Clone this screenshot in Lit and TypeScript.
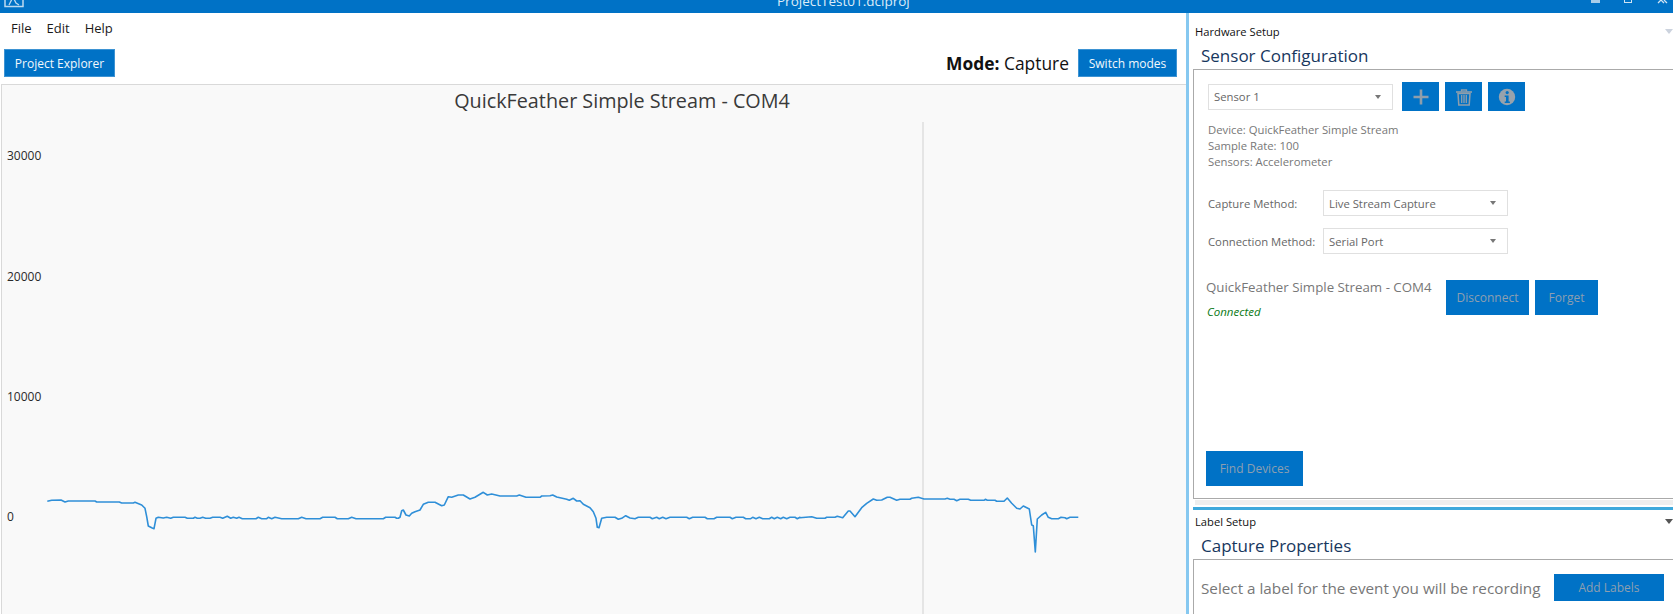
import { LitElement, html, css, svg } from "lit";
import { customElement } from "lit/decorators.js";

const seg6 = [[142,124],[155,121],[183,120],[195,126],[205,123],[285,123],[290,126],[358,126],[365,129],[400,129],[405,127],[425,135],[435,145],[440,170],[445,198],[455,203],[462,206],[468,175],[475,172],[490,174],[500,172],[512,175],[520,172],[555,172],[562,175],[580,175],[585,172],[592,175],[600,175],[608,172],[617,175],[630,175],[638,172],[660,172],[668,175],[682,169],[692,175],[700,172],[710,175],[717,172],[727,176],[768,176],[775,172],[785,176],[800,176],[805,172],[815,176],[825,172],[845,176],[895,176],[905,172],[918,176],[960,176],[968,172],[1005,172],[1012,176],[1045,176],[1055,172],[1068,176],[1150,176],[1157,172],[1185,172],[1190,175]];
const seg7 = [[-5,175],[0,172],[5,152],[10,150],[18,165],[28,168],[35,160],[45,155],[60,150],[70,133],[85,127],[105,127],[125,137],[133,135],[145,110],[155,112],[175,105],[190,105],[210,117],[225,112],[250,97],[262,105],[275,102],[300,108],[350,108],[358,105],[378,112],[420,112],[425,108],[450,107],[458,105],[470,111],[500,118],[508,121],[520,115],[530,123],[540,122],[550,133],[570,143],[580,155],[588,175],[592,202],[597,203],[605,175],[620,172],[645,172],[655,178],[665,175],[677,167],[690,174],[705,176],[715,172],[750,172],[757,176],[770,172],[778,176],[788,172],[798,176],[810,172],[860,172],[868,176],[878,172],[915,172],[922,176],[942,176],[950,172],[990,172],[997,176],[1008,172],[1030,172],[1037,176],[1052,176],[1058,172],[1068,176],[1078,172],[1088,176],[1108,176],[1115,172],[1123,176],[1132,172],[1142,176],[1150,172],[1160,176],[1170,172],[1185,172],[1192,176],[1200,172]];
const seg8 = [[0,173],[35,170],[50,175],[75,175],[80,172],[105,172],[112,169],[128,173],[145,153],[150,153],[165,170],[185,143],[200,130],[220,117],[230,121],[245,120],[262,112],[270,112],[290,121],[300,118],[330,118],[335,115],[355,112],[372,117],[435,117],[442,115],[450,118],[462,118],[470,122],[480,118],[505,118],[512,121],[552,121],[556,118],[562,121],[585,121],[590,124],[612,124],[622,114],[635,130],[650,145],[660,147],[670,138],[688,147],[695,195],[700,197],[706,276],[712,177],[725,165],[737,157],[745,172],[755,176],[775,176],[783,172],[795,173],[800,176],[810,172],[835,172]];

const fmt = (pts: number[][], ox: number) =>
  pts.map(([x, y]) => `${(ox + x / 3).toFixed(1)},${(460 + y / 3).toFixed(1)}`).join(" ");
const TRACE = [fmt(seg6, 0), fmt(seg7, 400), fmt(seg8, 800)].join(" ");

const TICKS = [
  { label: "30000", y: 155 },
  { label: "20000", y: 276 },
  { label: "10000", y: 396 },
  { label: "0", y: 516 },
];

@customElement("app-root")
export class AppRoot extends LitElement {
  static styles = css`
    :host {
      display: block;
      width: 1673px;
      height: 614px;
      overflow: hidden;
      background: #fff;
      font-family: "Open Sans", "Noto Sans", sans-serif;
      color: #1a1a1a;
    }
    * { box-sizing: border-box; }
    .titlebar {
      height: 13px;
      background: #0072c6;
      display: flex;
      align-items: flex-end;
      justify-content: space-between;
      overflow: hidden;
      position: relative;
    }
    .app-icon { display: block; margin: 0 0 5px 4px; }
    .title {
      position: absolute;
      left: 777px;
      bottom: 3px;
      color: #dcecf8;
      font-size: 13.5px;
      line-height: 18px;
      white-space: nowrap;
    }
    .controls { display: block; align-self: flex-start; }
    .main { display: flex; height: 601px; }
    .left { width: 1186px; flex: none; display: flex; flex-direction: column; }
    .menu {
      height: 31px;
      display: flex;
      gap: 15px;
      padding: 6px 0 0 11px;
      font-size: 13px;
      line-height: 18px;
      color: #1a1a1a;
    }
    .toolbar {
      height: 40px;
      padding: 5px 9px 0 4px;
      display: flex;
      align-items: flex-start;
      justify-content: space-between;
    }
    .btn {
      background: #0072c6;
      color: #f2f8fc;
      border: 1px solid #3d93d3;
      font: inherit;
      font-size: 12px;
      font-weight: 500;
      height: 28px;
      padding: 0;
      display: flex;
      align-items: center;
      justify-content: center;
    }
    .mode-wrap { display: flex; align-items: center; gap: 9px; }
    .mode { font-size: 17.4px; color: #111; line-height: 28px; }
    .mode b { font-weight: 700; }
    .w-explorer { width: 111px; }
    .w-switch { width: 99px; }
    .chart {
      flex: 1;
      margin-left: 1px;
      background: #f9f9f9;
      border-top: 1px solid #d9d9d9;
      border-left: 1px solid #d9d9d9;
      display: flex;
      flex-direction: column;
      min-height: 0;
    }
    .chart-title {
      height: 37px;
      padding: 2px 0 0 56px;
      text-align: center;
      font-size: 19.8px;
      line-height: 27px;
      color: #3a3a3a;
      flex: none;
    }
    .plot { display: block; flex: 1; width: 100%; min-height: 0; }
    .tick { font-size: 12px; fill: #2a2a2a; font-family: "Open Sans", "Noto Sans", sans-serif; }
    .split { width: 3px; flex: none; background: #86c8f0; }
    .right { flex: 1; min-width: 0; display: flex; flex-direction: column; }
    .dock-head {
      display: flex;
      justify-content: space-between;
      align-items: center;
      padding-left: 6px;
      font-size: 11.2px;
      color: #111;
      flex: none;
    }
    .head-a { height: 31px; padding-top: 6px; }
    .head-b { height: 25px; padding-bottom: 2px; }
    .section-title {
      font-size: 17px;
      line-height: 24px;
      color: #17375e;
      padding-left: 12px;
      flex: none;
    }
    .t-a { height: 25px; }
    .t-b { height: 24px; line-height: 22px; }
    .box {
      margin-left: 4px;
      border: 1px solid #aaa;
      border-right: 0;
      flex: none;
    }
    .box-a {
      height: 430px;
      padding: 12px 0 0 14px;
      display: flex;
      flex-direction: column;
    }
    .sensor-row { display: flex; gap: 6px; align-items: center; }
    .select {
      width: 185px;
      height: 26px;
      border: 1px solid #e0e0e0;
      background: #fff;
      display: flex;
      align-items: center;
      justify-content: space-between;
      padding: 0 11px 0 5px;
      color: #666;
      font-size: 11.3px;
    }
    .select.s1 { margin-right: 3px; }
    .caret { width: 0; height: 0; border-left: 3px solid transparent; border-right: 3px solid transparent; border-top: 4px solid #777; }
    .icon-btn {
      width: 37px;
      height: 29px;
      background: #0072c6;
      display: flex;
      align-items: center;
      justify-content: center;
    }
    .info { margin-top: 11px; font-size: 11.3px; line-height: 16px; color: #777; }
    .field { display: flex; align-items: center; height: 26px; font-size: 11.3px; color: #666; }
    .field label { width: 115px; flex: none; }
    .f1 { margin-top: 20px; }
    .f2 { margin-top: 12px; }
    .conn { display: flex; margin: 26px 0 0 -2px; height: 35px; }
    .conn-text { width: 240px; flex: none; }
    .conn-name { font-size: 13.3px; line-height: 18px; color: #777; margin-top: -2px; }
    .conn-state { font-size: 11.5px; font-style: italic; color: #0a7a16; line-height: 16px; margin-top: 8px; margin-left: 1px; }
    .dim {
      background: #0072c6;
      color: #8d9fb0;
      display: flex;
      align-items: center;
      justify-content: center;
      font-size: 12px;
    }
    .w-disc { width: 83px; height: 35px; }
    .w-forget { width: 63px; height: 35px; margin-left: 6px; }
    .w-find { width: 97px; height: 35px; margin: 136px 0 0 -2px; }
    .gap-bar { height: 5px; margin: 1px 0 0 6px; background: #eee; flex: none; }
    .blue-bar { height: 3px; margin: 2px 0 0 4px; background: #3fa9dc; flex: none; }
    .caret-lg { border-left-width: 4px; border-right-width: 4px; border-top-width: 5px; margin-right: 0; }
    .caret-pale { border-top-color: #ccd3de; }
    .caret-dark { border-top-color: #555; }
    .box-b {
      height: 80px;
      padding: 14px 0 0 7px;
      display: flex;
      align-items: flex-start;
    }
    .prompt { width: 353px; flex: none; font-size: 15.25px; line-height: 28px; color: #777; }
    .w-add { width: 110px; height: 27px; }
  `;

  render() {
    return html`
      <div class="titlebar">
        <svg class="app-icon" width="20" height="12" viewBox="0 0 20 12" fill="none" stroke="#bcd9ef" stroke-width="1.5">
          <path d="M1 -4V10.5H19V-4" />
          <path d="M5 9L9 1L12 7L15 9" stroke-width="1.3" />
        </svg>
        <span class="title">ProjectTest01.dciproj</span>
        <svg class="controls" width="93" height="4" viewBox="0 0 93 4" fill="none">
          <rect x="11" y="0" width="9" height="3" fill="#a9cde9" />
          <rect x="44.5" y="-3" width="7" height="5.5" stroke="#cfe3f3" />
          <path d="M78 3L81 0L84 3M84 0L87 3" stroke="#cfe3f3" stroke-width="1.3" />
        </svg>
      </div>
      <div class="main">
        <div class="left">
          <div class="menu"><span>File</span><span>Edit</span><span>Help</span></div>
          <div class="toolbar">
            <button class="btn w-explorer">Project Explorer</button>
            <div class="mode-wrap">
              <span class="mode"><b>Mode:</b> Capture</span>
              <button class="btn w-switch">Switch modes</button>
            </div>
          </div>
          <div class="chart">
            <div class="chart-title">QuickFeather Simple Stream - COM4</div>
            <svg class="plot" viewBox="2 122 1184 492" preserveAspectRatio="xMinYMin slice">
              <line x1="923" y1="122" x2="923" y2="614" stroke="#dedede" stroke-width="1.5" />
              ${TICKS.map((t) => svg`<text class="tick" x="7" y=${t.y + 5}>${t.label}</text>`)}
              <polyline points=${TRACE} fill="none" stroke="#2f8fd8" stroke-width="1.6" stroke-linejoin="round" />
            </svg>
          </div>
        </div>
        <div class="split"></div>
        <div class="right">
          <div class="dock-head head-a"><span>Hardware Setup</span><span class="caret caret-lg caret-pale"></span></div>
          <div class="section-title t-a">Sensor Configuration</div>
          <div class="box box-a">
            <div class="sensor-row">
              <div class="select s1"><span>Sensor 1</span><span class="caret"></span></div>
              <div class="icon-btn">
                <svg width="18" height="18" viewBox="0 0 18 18"><path d="M9 1.5v15M1.5 9h15" stroke="#8e9eac" stroke-width="2.6" /></svg>
              </div>
              <div class="icon-btn">
                <svg width="18" height="18" viewBox="0 0 18 18" fill="none" stroke="#8e9eac">
                  <path d="M1 4h16" stroke-width="1.6" /><path d="M6.5 3.5V2h5v1.5" stroke-width="1.3" />
                  <path d="M3 5.5l.8 11.5h10.4L15 5.5z" stroke-width="1.5" />
                  <path d="M6.7 7v8M9 7v8M11.3 7v8" stroke-width="1.3" />
                </svg>
              </div>
              <div class="icon-btn">
                <svg width="18" height="18" viewBox="0 0 18 18">
                  <circle cx="9" cy="9" r="8.2" fill="#97a2ac" />
                  <circle cx="9.2" cy="4.6" r="1.6" fill="#0072c6" />
                  <path d="M6.7 7.4h3.9v6h1.3v1.6H6.7v-1.6H8v-4.4H6.7z" fill="#0072c6" />
                </svg>
              </div>
            </div>
            <div class="info">
              <div>Device: QuickFeather Simple Stream</div>
              <div>Sample Rate: 100</div>
              <div>Sensors: Accelerometer</div>
            </div>
            <div class="field f1"><label>Capture Method:</label><div class="select"><span>Live Stream Capture</span><span class="caret"></span></div></div>
            <div class="field f2"><label>Connection Method:</label><div class="select"><span>Serial Port</span><span class="caret"></span></div></div>
            <div class="conn">
              <div class="conn-text">
                <div class="conn-name">QuickFeather Simple Stream - COM4</div>
                <div class="conn-state">Connected</div>
              </div>
              <div class="dim w-disc">Disconnect</div>
              <div class="dim w-forget">Forget</div>
            </div>
            <div class="dim w-find">Find Devices</div>
          </div>
          <div class="gap-bar"></div>
          <div class="blue-bar"></div>
          <div class="dock-head head-b"><span>Label Setup</span><span class="caret caret-lg caret-dark"></span></div>
          <div class="section-title t-b">Capture Properties</div>
          <div class="box box-b">
            <span class="prompt">Select a label for the event you will be recording</span>
            <div class="dim w-add">Add Labels</div>
          </div>
        </div>
      </div>
    `;
  }
}
